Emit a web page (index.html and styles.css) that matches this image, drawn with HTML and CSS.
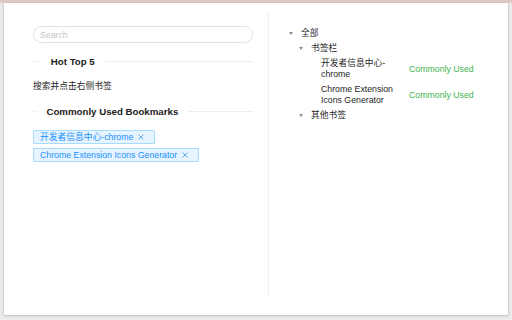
FILE: index.html
```html
<!DOCTYPE html>
<html>
<head>
<meta charset="utf-8">
<link rel="stylesheet" href="styles.css">
</head>
<body>
<div class="topband"></div>
<div class="stage">
  <div class="popup">
    <div class="left">
      <div class="search"><span class="placeholder">Search</span></div>
      <div class="divider"><span class="dtext">Hot Top 5</span></div>
      <div class="hint">搜索并点击右侧书签</div>
      <div class="divider"><span class="dtext">Commonly Used Bookmarks</span></div>
      <div class="tags">
        <span class="tag">开发者信息中心-chrome<svg class="x" viewBox="0 0 6 6"><path d="M0.5 0.5L5.5 5.5M5.5 0.5L0.5 5.5"/></svg></span>
        <span class="tag">Chrome Extension Icons Generator<svg class="x" viewBox="0 0 6 6"><path d="M0.5 0.5L5.5 5.5M5.5 0.5L0.5 5.5"/></svg></span>
      </div>
    </div>
    <div class="vline"></div>
    <div class="right">
      <div class="node"><span class="sw"><i class="caret"></i></span><span class="title">全部</span></div>
      <div class="node l1"><span class="sw"><i class="caret"></i></span><span class="title">书签栏</span></div>
      <div class="node l2 leaf"><span class="sw"></span><span class="title"><span class="name">开发者信息中心-chrome</span><span class="used">Commonly Used</span></span></div>
      <div class="node l2 leaf"><span class="sw"></span><span class="title"><span class="name">Chrome Extension Icons Generator</span><span class="used">Commonly Used</span></span></div>
      <div class="node l1"><span class="sw"><i class="caret"></i></span><span class="title">其他书签</span></div>
    </div>
  </div>
</div>
</body>
</html>
```
FILE: styles.css
```css
html, body {
  margin: 0;
  padding: 0;
  width: 512px;
  height: 320px;
  overflow: hidden;
  background: #ebebeb;
  font-family: "Liberation Sans", "Noto Sans CJK SC", sans-serif;
  font-size: 8.75px;
  color: #262626;
}
.topband {
  height: 3px;
  background: #dccbc2;
}
.stage {
  padding: 0 4px 0 4px;
}
.popup {
  height: 312px;
  background: #fff;
  display: flex;
  box-shadow: 0 1px 2px rgba(0,0,0,0.18), 1px 0 1px rgba(0,0,0,0.08), -1px 0 1px rgba(0,0,0,0.06);
}
.left {
  width: 220px;
  padding: 23px 15px 0 29px;
  display: flex;
  flex-direction: column;
}
.search {
  height: 15px;
  border: 1px solid #e2e2e2;
  border-radius: 9px;
  padding-left: 6px;
  display: flex;
  align-items: center;
}
.placeholder {
  color: #c4c4c4;
  font-size: 8.75px;
}
.divider {
  display: flex;
  align-items: center;
  margin-top: 11px;
  height: 15px;
}
.divider::before, .divider::after {
  content: "";
  border-top: 1px solid #eeeeee;
  height: 0;
}
.divider::before { flex: 0 1 5%; }
.divider::after { flex: 0 1 95%; }
.dtext {
  font-size: 9.7px;
  font-weight: 600;
  padding: 0 10px;
  white-space: nowrap;
  line-height: 15px;
  color: #222;
}
.hint {
  margin-top: 11px;
  line-height: 13px;
}
.tags {
  margin-top: 11px;
  display: flex;
  flex-direction: column;
  align-items: flex-start;
  gap: 4px;
}
.tag {
  display: inline-flex;
  align-items: center;
  height: 12px;
  padding: 0 10px 0 6px;
  border: 1px solid #a8dcff;
  background: #e6f4ff;
  color: #1890ff;
  border-radius: 1px;
  white-space: nowrap;
  line-height: 12px;
}
.x {
  width: 6px;
  height: 6px;
  margin-left: 5px;
  fill: none;
  stroke: #5a9fe0;
  stroke-width: 0.9;
}
.vline {
  width: 1px;
  background: #f0f0f0;
  margin: 9px 0 17px 0;
}
.right {
  flex: 1;
  padding: 23px 0 0 14px;
}
.node {
  display: flex;
  align-items: center;
  min-height: 15px;
}
.l1 { padding-left: 10px; }
.l2 { padding-left: 20px; }
.sw {
  width: 16px;
  flex: none;
  display: flex;
  justify-content: center;
  align-items: center;
}
.caret {
  width: 0;
  height: 0;
  border-left: 2px solid transparent;
  border-right: 2px solid transparent;
  border-top: 3px solid #8c8c8c;
}
.title {
  padding-left: 2px;
  line-height: 15px;
}
.leaf {
  padding-top: 2px;
  padding-bottom: 2px;
}
.leaf .title {
  display: flex;
  align-items: center;
  line-height: 11px;
}
.name {
  width: 80px;
}
.used {
  margin-left: 8px;
  color: #3eb650;
  white-space: nowrap;
}
```
